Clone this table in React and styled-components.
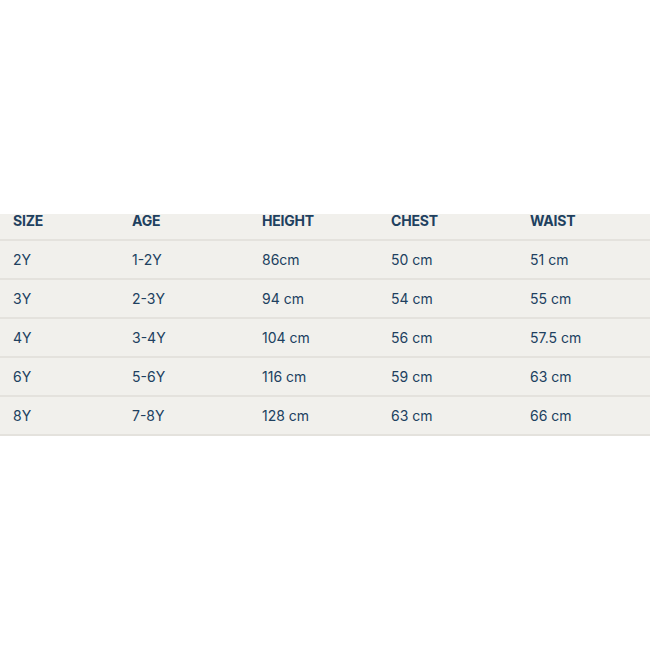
import React from "react"
import styled, { createGlobalStyle } from "styled-components"

const GlobalStyle = createGlobalStyle`
  html, body {
    margin: 0;
    padding: 0;
    background: #ffffff;
  }
  body {
    font-family: "Inter", "Liberation Sans", sans-serif;
  }
`

const Page = styled.div`
  width: 650px;
  height: 650px;
  overflow: hidden;
  padding-top: 214px;
  box-sizing: border-box;
`

const Table = styled.div`
  background: #f1f0ec;
  color: #20405f;
`

const Row = styled.div`
  display: grid;
  grid-template-columns: 119px 130px 129px 139px 1fr;
  align-items: center;
  padding-left: 13px;
  height: ${props => (props.$head ? "25px" : "37px")};
  border-bottom: 2px solid #e4e2dd;
`

const HeadCell = styled.div`
  font-size: 14px;
  font-weight: 700;
  letter-spacing: -0.2px;
  align-self: start;
  line-height: 14px;
`

const Cell = styled.div`
  font-size: 14px;
  font-weight: 400;
  line-height: 16px;
`

const head = ["SIZE", "AGE", "HEIGHT", "CHEST", "WAIST"]

const rows = [
  ["2Y", "1-2Y", "86cm", "50 cm", "51 cm"],
  ["3Y", "2-3Y", "94 cm", "54 cm", "55 cm"],
  ["4Y", "3-4Y", "104 cm", "56 cm", "57.5 cm"],
  ["6Y", "5-6Y", "116 cm", "59 cm", "63 cm"],
  ["8Y", "7-8Y", "128 cm", "63 cm", "66 cm"],
]

const App = () => {
  return (
    <Page>
      <GlobalStyle />
      <Table>
        <Row $head>
          {head.map(h => (
            <HeadCell key={h}>{h}</HeadCell>
          ))}
        </Row>
        {rows.map(r => (
          <Row key={r[0]}>
            {r.map((c, i) => (
              <Cell key={i}>{c}</Cell>
            ))}
          </Row>
        ))}
      </Table>
    </Page>
  )
}

export default App
